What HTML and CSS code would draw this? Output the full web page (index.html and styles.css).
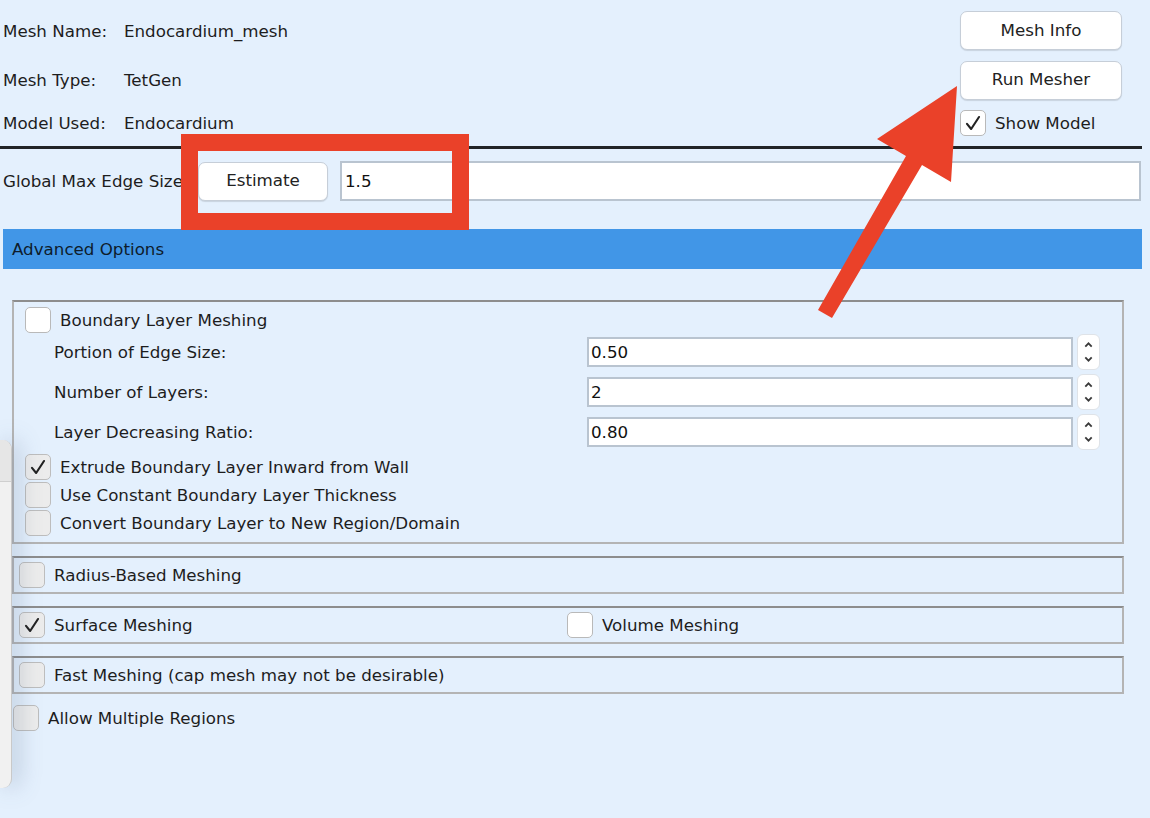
FILE: index.html
```html
<!DOCTYPE html>
<html>
<head>
<meta charset="utf-8">
<link rel="stylesheet" href="styles.css">
</head>
<body>
<div class="side-panel"><div class="side-head"></div></div>

<div class="header">
  <div class="lbl">Mesh Name:</div><div class="val">Endocardium_mesh</div>
  <div class="btn">Mesh Info</div>
  <div class="lbl">Mesh Type:</div><div class="val">TetGen</div>
  <div class="btn">Run Mesher</div>
  <div class="lbl">Model Used:</div><div class="val">Endocardium</div>
  <div class="check-item">
    <span class="cb on"><svg viewBox="0 0 26 26"><path d="M6.5 14 L11 19.5 L19.5 6.5"/></svg></span>
    <span>Show Model</span>
  </div>
</div>

<div class="sep"></div>

<div class="global-row">
  <div class="global-label">Global Max Edge Size:</div>
  <div class="btn est">Estimate</div>
  <div class="input wide">1.5</div>
</div>

<div class="adv-bar">Advanced Options</div>

<div class="group g1">
  <div class="check-item">
    <span class="cb"></span><span>Boundary Layer Meshing</span>
  </div>
  <div class="field first">
    <div class="field-label">Portion of Edge Size:</div>
    <div class="input num">0.50</div>
    <div class="spin"><svg viewBox="0 0 23 36"><path d="M8 12 L11.5 8.5 L15 12"/><path d="M8 24 L11.5 27.5 L15 24"/></svg></div>
  </div>
  <div class="field">
    <div class="field-label">Number of Layers:</div>
    <div class="input num">2</div>
    <div class="spin"><svg viewBox="0 0 23 36"><path d="M8 12 L11.5 8.5 L15 12"/><path d="M8 24 L11.5 27.5 L15 24"/></svg></div>
  </div>
  <div class="field">
    <div class="field-label">Layer Decreasing Ratio:</div>
    <div class="input num">0.80</div>
    <div class="spin"><svg viewBox="0 0 23 36"><path d="M8 12 L11.5 8.5 L15 12"/><path d="M8 24 L11.5 27.5 L15 24"/></svg></div>
  </div>
  <div class="sub-checks">
    <div class="check-item">
      <span class="cb dis"><svg viewBox="0 0 26 26"><path d="M6.5 14 L11 19.5 L19.5 6.5"/></svg></span>
      <span>Extrude Boundary Layer Inward from Wall</span>
    </div>
    <div class="check-item">
      <span class="cb dis"></span><span>Use Constant Boundary Layer Thickness</span>
    </div>
    <div class="check-item">
      <span class="cb dis"></span><span>Convert Boundary Layer to New Region/Domain</span>
    </div>
  </div>
</div>

<div class="group small">
  <div class="check-item">
    <span class="cb dis"></span><span>Radius-Based Meshing</span>
  </div>
</div>

<div class="group small">
  <div class="check-item surf">
    <span class="cb dis"><svg viewBox="0 0 26 26"><path d="M6.5 14 L11 19.5 L19.5 6.5"/></svg></span>
    <span>Surface Meshing</span>
  </div>
  <div class="check-item">
    <span class="cb"></span><span>Volume Meshing</span>
  </div>
</div>

<div class="group small">
  <div class="check-item">
    <span class="cb dis"></span><span>Fast Meshing (cap mesh may not be desirable)</span>
  </div>
</div>

<div class="check-item allow">
  <span class="cb dis"></span><span>Allow Multiple Regions</span>
</div>

<div class="red-box"></div>
<svg class="arrow" viewBox="0 0 1150 818" width="1150" height="818">
  <polygon points="957,86 877,139 906,156 818,310 832,318 922,165 951,182"/>
</svg>
</body>
</html>
```

FILE: styles.css
```css
html, body {
  margin: 0;
  padding: 0;
}
body {
  position: relative;
  width: 1150px;
  height: 818px;
  overflow: hidden;
  background: #e4f0fd;
  font-family: "DejaVu Sans", Verdana, sans-serif;
  font-size: 16.7px;
  color: #1d1d1d;
}

.side-panel {
  position: absolute;
  left: 0;
  top: 440px;
  width: 11px;
  height: 348px;
  background: #f1f1f1;
  border-right: 1px solid #c9c9c9;
  border-radius: 0 9px 9px 0;
  box-shadow: 6px 0 22px rgba(90, 110, 140, 0.35);
  overflow: hidden;
}
.side-head {
  height: 41px;
  background: #e6e6e6;
  border-bottom: 1px solid #cfcfcf;
}

.header {
  display: grid;
  grid-template-columns: 121px 1fr 162px;
  grid-template-rows: 39px 40px 26px;
  row-gap: 10px;
  padding: 11px 28px 0 3px;
  align-items: center;
}
.lbl, .val {
  line-height: 20px;
}

.btn {
  box-sizing: border-box;
  height: 39px;
  background: #ffffff;
  border: 1px solid #c6ced8;
  border-radius: 7px;
  box-shadow: 0 1px 1px rgba(0, 0, 0, 0.12);
  display: flex;
  align-items: center;
  justify-content: center;
  color: #222;
  padding-bottom: 2px;
}

.check-item {
  display: flex;
  align-items: center;
  gap: 9px;
  height: 26px;
}
.cb {
  box-sizing: border-box;
  flex: 0 0 26px;
  width: 26px;
  height: 26px;
  border: 1.5px solid #b9b9b9;
  border-radius: 5px;
  background: #ffffff;
  display: flex;
  align-items: center;
  justify-content: center;
}
.cb.dis {
  background: #ececec;
  border-color: #bdbdbd;
}
.cb svg {
  width: 24px;
  height: 24px;
}
.cb svg path {
  fill: none;
  stroke: #222;
  stroke-width: 2.3;
  stroke-linecap: round;
  stroke-linejoin: round;
}

.sep {
  margin-top: 10px;
  width: 1142px;
  height: 3px;
  background: #212427;
}

.global-row {
  display: flex;
  align-items: center;
  margin-top: 12px;
  padding-left: 3px;
  margin-right: 9px;
  height: 40px;
}
.global-label {
  flex: 0 0 195px;
  white-space: nowrap;
  overflow: hidden;
}
.btn.est {
  flex: 0 0 130px;
}
.input {
  box-sizing: border-box;
  background: #ffffff;
  border: 2px solid #b9c4d0;
  display: flex;
  align-items: center;
  color: #111;
}
.input.wide {
  flex: 1;
  height: 40px;
  margin-left: 12px;
  padding-left: 3px;
}

.adv-bar {
  margin-top: 28px;
  margin-left: 3px;
  width: 1139px;
  height: 40px;
  background: #4196e7;
  color: #0e1c2c;
  display: flex;
  align-items: center;
  padding-left: 9px;
  box-sizing: border-box;
}

.group {
  box-sizing: border-box;
  margin-left: 12px;
  width: 1112px;
  border: 2px solid #b4b4b4;
  border-top-color: #8d8d8d;
}
.g1 {
  margin-top: 31px;
  height: 244px;
  padding: 5px 0 0 11px;
}
.field {
  display: flex;
  align-items: center;
  height: 30px;
  margin-top: 10px;
}
.field.first {
  margin-top: 4px;
}
.field-label {
  flex: 0 0 533px;
  margin-left: 29px;
}
.input.num {
  flex: 0 0 486px;
  height: 30px;
  padding-left: 2px;
}
.spin {
  box-sizing: border-box;
  margin-left: 4px;
  width: 23px;
  height: 36px;
  background: #ffffff;
  border: 1px solid #dfe3e8;
  border-radius: 6px;
}
.spin svg {
  display: block;
  width: 21px;
  height: 34px;
}
.spin svg path {
  fill: none;
  stroke: #3a3a3a;
  stroke-width: 2;
}
.sub-checks {
  margin-top: 7px;
  display: flex;
  flex-direction: column;
  gap: 2px;
}

.group.small {
  margin-top: 12px;
  height: 38px;
  padding-left: 5px;
  display: flex;
  align-items: center;
}
.check-item.surf {
  flex: 0 0 548px;
}

.check-item.allow {
  margin-top: 11px;
  margin-left: 13px;
}

.red-box {
  position: absolute;
  left: 181px;
  top: 134px;
  width: 288px;
  height: 96px;
  box-sizing: border-box;
  border: 17px solid #ea4129;
}
.arrow {
  position: absolute;
  left: 0;
  top: 0;
  pointer-events: none;
}
.arrow polygon {
  fill: #ea4129;
}
```
